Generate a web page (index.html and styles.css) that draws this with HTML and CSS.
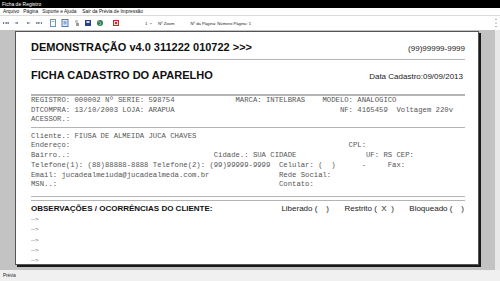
FILE: index.html
```html
<!DOCTYPE html>
<html lang="pt">
<head>
<meta charset="utf-8">
<title>Ficha de Registro</title>
<link rel="stylesheet" href="styles.css">
</head>
<body>
<div class="window">
  <div class="titlebar">Ficha de Registro</div>
  <div class="menubar">
    <span>Arquivo</span><span>Página</span><span>Suporte e Ajuda</span><span>Sair da Prévia de Impressão</span>
  </div>
  <div class="toolbar">
    <div class="tools">
      <svg class="ico i1" viewBox="0 0 8 8"><rect x="1" y="3" width="1" height="2" fill="#6a7a9a"/><path d="M2 4 L5 3 L5 5 Z M4 4 L7 3 L7 5 Z" fill="#6a7a9a"/></svg>
      <svg class="ico i2" viewBox="0 0 8 8"><path d="M2 4 L6 3 L6 5 Z" fill="#6a7a9a"/></svg>
      <svg class="ico i3" viewBox="0 0 8 8"><path d="M6 4 L2 3 L2 5 Z" fill="#6a7a9a"/></svg>
      <svg class="ico i4" viewBox="0 0 8 8"><path d="M6 4 L3 3 L3 5 Z M4 4 L1 3 L1 5 Z" fill="#6a7a9a"/><rect x="6" y="3" width="1" height="2" fill="#6a7a9a"/></svg>
      <svg class="ico i5" viewBox="0 0 8 8"><rect x="1.5" y="0.5" width="5" height="7" fill="#fff" stroke="#6f8fc8"/><rect x="2.5" y="2" width="3" height="1" fill="#9fb4dc"/></svg>
      <svg class="ico i6" viewBox="0 0 8 8"><rect x="1" y="0.5" width="6" height="7" fill="#e4ecf8" stroke="#5577bb"/><rect x="2.5" y="2" width="3" height="3.5" fill="#8fa8d8"/></svg>
      <svg class="ico i7" viewBox="0 0 8 8"><rect x="2" y="1" width="3" height="3" fill="#c8c8c8"/><rect x="3" y="4" width="3" height="3" fill="#9a9a9a"/></svg>
      <svg class="ico i8" viewBox="0 0 8 8"><rect x="1" y="1" width="6" height="6" fill="#2b3f8f"/><rect x="2.5" y="2" width="3" height="2" fill="#d8def0"/></svg>
      <svg class="ico i9" viewBox="0 0 8 8"><circle cx="4" cy="4" r="3" fill="#2f7d4f"/><path d="M2 3 Q4 2 5 4 Q5 6 3 6" fill="none" stroke="#9fd3b0" stroke-width="0.8"/></svg>
      <svg class="ico i10" viewBox="0 0 8 8"><rect x="1.5" y="1.5" width="5" height="5" fill="#f4d8d8" stroke="#cc2b2b"/><rect x="3" y="3" width="2" height="2" fill="#cc2b2b"/></svg>
    </div>
    <div class="zoom">
      <span class="combo">1<svg class="chev" viewBox="0 0 6 4"><path d="M1 1 L3 3 L5 1" fill="none" stroke="#555" stroke-width="0.8"/></svg></span>
      <span>Nº Zoom</span>
    </div>
    <span class="pageinfo">Nº da Página: Número Página: 1</span>
    <svg class="grip" viewBox="0 0 2 10"><circle cx="1" cy="1.5" r="0.6" fill="#555"/><circle cx="1" cy="5" r="0.6" fill="#555"/><circle cx="1" cy="8.5" r="0.6" fill="#555"/></svg>
  </div>

  <div class="preview">
    <div class="canvas">
      <div class="page">
        <div class="row head1">
          <span class="big">DEMONSTRAÇÃO v4.0 311222 010722 &gt;&gt;&gt;</span>
          <span class="small">(99)99999-9999</span>
        </div>
        <div class="rule thin r1"></div>
        <div class="row head2">
          <span class="big">FICHA CADASTRO DO APARELHO</span>
          <span class="small">Data Cadastro:09/09/2013</span>
        </div>
        <div class="rule thick r2"></div>
<pre class="mono reg">REGISTRO: 000002 Nº SERIE: 598754              MARCA: INTELBRAS    MODELO: ANALOGICO
DTCOMPRA: 13/10/2003 LOJA: ARAPUA                                      NF: 4165459  Voltagem 220v
ACESSOR.:</pre>
        <div class="rule thin r3"></div>
<pre class="mono cli">Cliente.: FIUSA DE ALMEIDA JUCA CHAVES
Endereço:                                                                CPL:
Bairro..:                                 Cidade.: SUA CIDADE                UF: RS CEP:
Telefone(1): (88)88888-8888 Telefone(2): (99)99999-9999  Celular: (  )      -     Fax:
Email: jucadealmeiuda@jucadealmeda.com.br                Rede Social:
MSN..:                                                   Contato:</pre>
        <div class="rule double"></div>
        <div class="row obs">
          <span class="obs-title">OBSERVAÇÕES / OCORRÊNCIAS DO CLIENTE:</span>
          <span class="flags">
            <span>Liberado (&nbsp;&nbsp;&nbsp;&nbsp;)</span>
            <span>Restrito (&nbsp;&nbsp;X&nbsp;&nbsp;)</span>
            <span>Bloqueado (&nbsp;&nbsp;&nbsp;&nbsp;)</span>
          </span>
        </div>
        <ul class="arrows">
          <li>--&gt;</li>
          <li>--&gt;</li>
          <li>--&gt;</li>
          <li>--&gt;</li>
          <li>--&gt;</li>
        </ul>
      </div>
    </div>
    <div class="vscroll"></div>
  </div>

  <div class="statusbar">Prévia</div>
</div>
</body>
</html>
```

FILE: styles.css
```css
* { box-sizing: border-box; }
html, body { margin: 0; padding: 0; }
body {
  width: 500px;
  height: 281px;
  overflow: hidden;
  background: #fff;
  font-family: "Liberation Sans", Arial, sans-serif;
}
.window {
  display: flex;
  flex-direction: column;
  width: 500px;
  height: 281px;
}
.titlebar {
  height: 8px;
  background: #000;
  color: #fff;
  font-size: 5px;
  line-height: 8px;
  padding-left: 2px;
}
.menubar {
  height: 8px;
  display: flex;
  gap: 4px;
  padding-left: 3px;
  font-size: 4.8px;
  line-height: 7px;
  color: #111;
  background: #fff;
  border-bottom: 1px solid #dcdcdc;
}
.menubar span:nth-child(4) { margin-left: 2px; }
.toolbar {
  height: 14px;
  display: flex;
  align-items: center;
  background: #fff;
  font-size: 4.2px;
  color: #222;
}
.tools {
  display: flex;
  align-items: center;
}
.ico {
  width: 8px;
  height: 8px;
  display: block;
}
.i1 { margin-left: 2px; }
.i2 { margin-left: 2px; }
.i3 { margin-left: 5px; }
.i4 { margin-left: 2px; }
.i5 { margin-left: 6px; }
.i6 { margin-left: 4px; }
.i7 { margin-left: 4px; }
.i8 { margin-left: 3px; }
.i9 { margin-left: 4px; }
.i10 { margin-left: 8px; }
.zoom {
  display: flex;
  align-items: center;
  gap: 5px;
  margin-left: 23px;
}
.combo {
  display: flex;
  align-items: center;
  gap: 2px;
  width: 10px;
  padding-left: 2px;
}
.chev { width: 4px; height: 3px; display: block; }
.pageinfo { margin-left: 16px; }
.grip {
  width: 2px;
  height: 10px;
  margin-left: auto;
  margin-right: 3px;
}
.preview {
  height: 240px;
  display: flex;
  background: #c3c3c3;
  overflow: hidden;
}
.canvas {
  flex: 1;
  padding: 1px 0 0 15px;
}
.vscroll {
  width: 5px;
  background: #e9e9e9;
}
.page {
  width: 464px;
  height: 234px;
  background: #fff;
  border: 1px solid #555;
  box-shadow: 2px 2px 0 #1a1a1a;
  padding: 9px 13px 0 15px;
  overflow: hidden;
}
.row {
  display: flex;
  justify-content: space-between;
  align-items: baseline;
}
.big {
  font-weight: bold;
  font-size: 11px;
  color: #111;
}
.small {
  font-size: 8px;
  color: #222;
}
.head1 { height: 13px; line-height: 13px; }
.head2 { height: 13px; line-height: 13px; margin-top: 8.5px; padding-right: 2px; }
.rule { background: #b4b4b4; }
.thin { height: 1px; }
.thick { height: 2px; }
.r1 { margin-top: 5px; }
.r2 { margin-top: 12.5px; }
.r3 { margin-top: 2px; }
.double {
  height: 5px;
  background: transparent;
  border-top: 1px solid #b4b4b4;
  border-bottom: 1px solid #b4b4b4;
  margin-top: 6px;
}
.mono {
  margin: 0;
  font-family: "Liberation Mono", "Courier New", monospace;
  font-size: 7.25px;
  color: #555;
  white-space: pre;
}
.reg { line-height: 9.5px; }
.cli { line-height: 9.8px; margin-top: 4px; }
.obs {
  height: 10px;
  line-height: 10px;
  margin-top: 3px;
  font-size: 8px;
}
.obs-title {
  font-weight: bold;
  color: #111;
}
.flags {
  display: flex;
  gap: 15.5px;
  color: #222;
  padding-right: 1px;
}
.arrows {
  list-style: none;
  margin: 0;
  padding: 0;
  font-size: 6px;
  color: #666;
}
.arrows li {
  height: 10.2px;
  line-height: 10.2px;
}
.statusbar {
  height: 11px;
  background: #f0f0f0;
  font-size: 4.5px;
  line-height: 11px;
  padding-left: 3px;
  color: #222;
}
```
